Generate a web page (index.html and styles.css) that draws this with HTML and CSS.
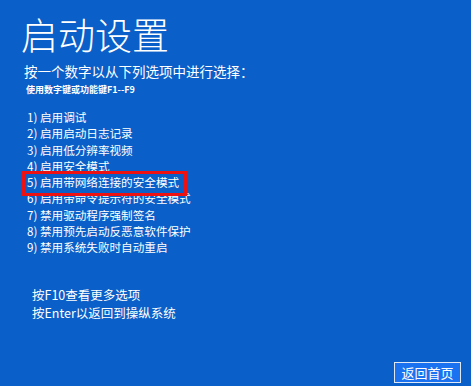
FILE: index.html
```html
<!DOCTYPE html>
<html lang="zh-CN">
<head>
<meta charset="utf-8">
<link rel="stylesheet" href="styles.css">
</head>
<body>
<div class="page">
  <h1 class="title">启动设置</h1>
  <p class="subtitle">按一个数字以从下列选项中进行选择：</p>
  <p class="hint">使用数字键或功能键F1--F9</p>
  <ol class="options">
    <li>1) 启用调试</li>
    <li>2) 启用启动日志记录</li>
    <li>3) 启用低分辨率视频</li>
    <li>4) 启用安全模式</li>
    <li class="selected">5) 启用带网络连接的安全模式</li>
    <li>6) 启用带命令提示符的安全模式</li>
    <li>7) 禁用驱动程序强制签名</li>
    <li>8) 禁用预先启动反恶意软件保护</li>
    <li>9) 禁用系统失败时自动重启</li>
  </ol>
  <div class="more">
    <p>按F10查看更多选项</p>
    <p>按Enter以返回到操纵系统</p>
  </div>
  <div class="actions">
    <button class="home-btn">返回首页</button>
  </div>
</div>
</body>
</html>
```
FILE: styles.css
```css
html, body {
  margin: 0;
  padding: 0;
}
body {
  background: #0a5fc8;
  color: #ffffff;
  font-family: "Noto Sans CJK SC", "Noto Sans", sans-serif;
}
.page {
  height: 386px;
  box-sizing: border-box;
  display: flex;
  flex-direction: column;
  padding: 0 10px 3px 21px;
}
.title {
  margin: 13px 0 0 0;
  font-size: 37px;
  line-height: 42px;
  font-weight: 300;
}
.subtitle {
  margin: 7px 0 0 3px;
  font-size: 13.5px;
  line-height: 18px;
}
.hint {
  margin: 4px 0 0 5px;
  font-size: 9px;
  line-height: 12px;
  font-weight: 700;
}
.options {
  list-style: none;
  margin: 13px 0 0 6px;
  padding: 0;
  font-size: 11.6px;
  line-height: 16.25px;
}
.options li {
  width: fit-content;
}
.options li.selected {
  position: relative;
}
.options li.selected::after {
  content: "";
  position: absolute;
  left: -5px;
  right: -8px;
  top: -3px;
  bottom: -6px;
  border: 3px solid #ee1111;
}
.more {
  margin: 31px 0 0 11px;
  font-size: 12.5px;
  line-height: 18px;
}
.more p {
  margin: 0;
}
.actions {
  margin-top: auto;
  display: flex;
  justify-content: flex-end;
}
.home-btn {
  width: 67px;
  height: 21px;
  padding: 0;
  background: #1a72f0;
  border: 1px solid #dfe8f7;
  color: #ffffff;
  font-family: "Noto Sans CJK SC", sans-serif;
  font-size: 13px;
  line-height: 19px;
}
```
